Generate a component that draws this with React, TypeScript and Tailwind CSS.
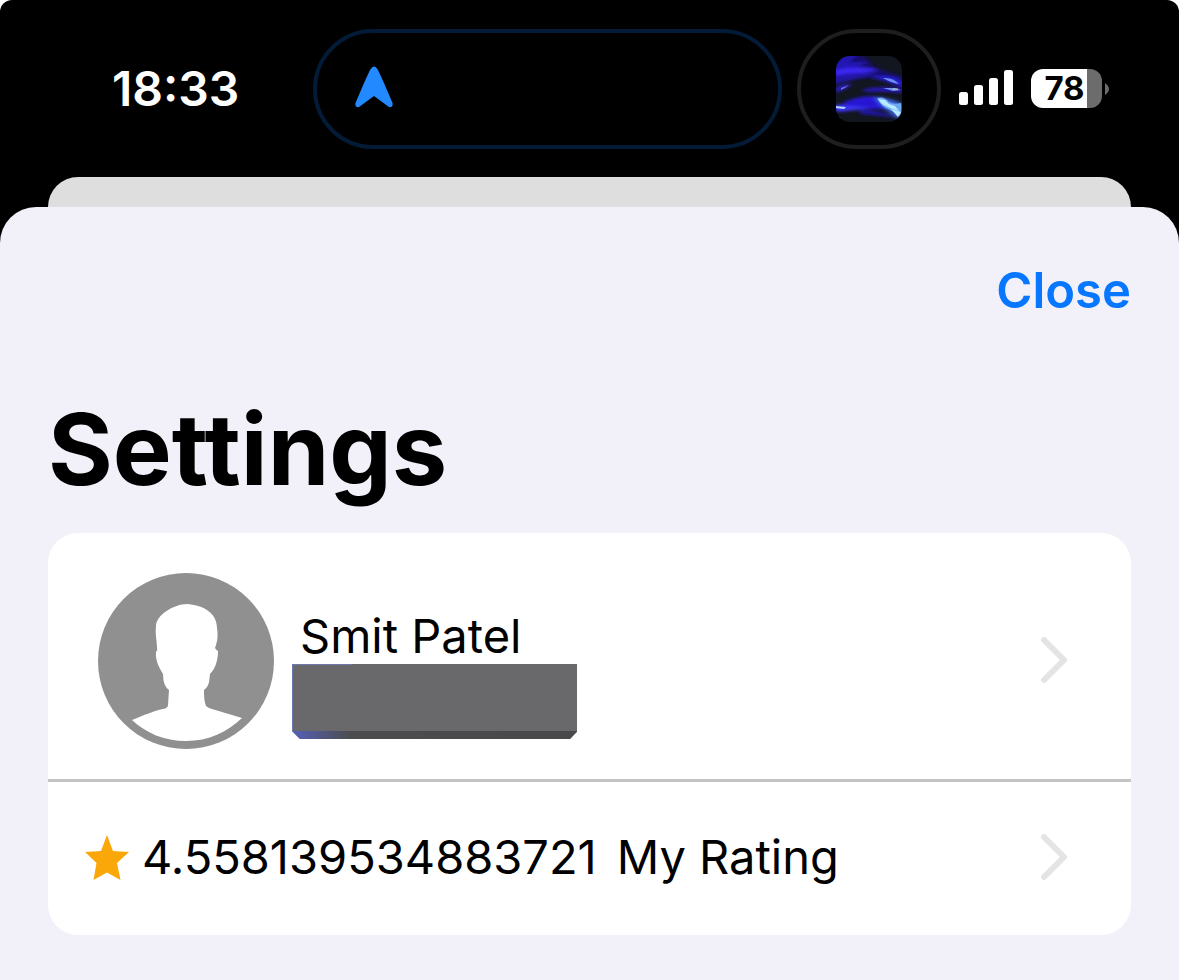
import React from "react";

const AlbumArt = () => (
    <svg className="size-[66px] shrink-0" viewBox="0 0 66 66" aria-hidden="true">
        <defs>
            <clipPath id="art"><rect width="66" height="66" rx="14" /></clipPath>
            <filter id="soft" x="-20%" y="-50%" width="140%" height="200%"><feGaussianBlur stdDeviation="2.4 1.4" /></filter>
            <filter id="fine" x="-20%" y="-50%" width="140%" height="200%"><feGaussianBlur stdDeviation="0.7" /></filter>
        </defs>
        <g clipPath="url(#art)">
            <rect width="66" height="66" fill="#12161f" />
            <g filter="url(#soft)">
                <path d="M-4 -2 H26 L40 12 L66 20 L66 26 L30 22 L-4 28Z" fill="#150e66" />
                <path d="M-4 0 L24 -2 L12 6 L34 6 L20 11 L-4 14Z" fill="#2217b4" />
                <path d="M-4 15 Q18 8 44 14 Q22 18 -4 22Z" fill="#3a28f0" />
                <path d="M-4 20 Q20 15 44 18 Q20 22 -4 29Z" fill="#2314a4" />
                <path d="M36 21 Q54 17 68 26 L68 32 Q52 26 36 21Z" fill="#281bd0" />
                <path d="M-2 33 Q7 27 16 28 Q9 34 -2 37Z" fill="#2b1cc4" />
                <path d="M28 33 Q48 29 68 33 L68 37 Q44 35 28 36Z" fill="#2517b4" />
                <path d="M8 46 Q28 38 44 41 L54 54 Q34 51 4 56Z" fill="#2818d4" />
                <path d="M-2 48 L16 50 L36 52 L12 55 L-2 56Z" fill="#3b35f0" />
                <path d="M24 54 Q42 53 62 62 Q42 59 24 58Z" fill="#2412a8" />
                <path d="M38 41 Q54 41 68 49 L68 66 Q50 56 38 41Z" fill="#3d63e0" />
            </g>
            <g filter="url(#fine)">
                <path d="M47 22 Q57 21 63 28 Q55 27 47 22Z" fill="#6b8cf4" />
                <path d="M5 32 L13 29 L9 32 L5 34Z" fill="#656dd6" />
                <path d="M47 32 L58 32 L65 34 L57 35Z" fill="#6f91ee" />
                <path d="M-1 50 L10 51 L8 53 L-1 52Z" fill="#b4d6ff" />
                <path d="M41 42 Q48 40 53 46 Q58 49 65 47 L65 61 L60 57 L54 54 Q45 51 41 42Z" fill="#6da9f2" />
                <path d="M42 43 L49 44 L53 48 L59 50 L63 55 L54 52 L46 48Z M55 53 L65 56 L62 61Z" fill="#b9eaff" />
                <path d="M1 60 L5 62 L1 63Z" fill="#4740dc" />
                <path d="M57 33 H62" stroke="#e0d29b" strokeWidth="1" />
            </g>
        </g>
    </svg>
)

const Avatar = () => (
    <svg className="size-[176px] shrink-0" viewBox="0 0 176 176" aria-hidden="true">
        <circle cx="88" cy="88" r="88" fill="#909090" />
        <path
            fill="#fff"
            d="M89 31 C104 32 119 39 119 55 C120 62 120 67 117 75 Q118 77 120 78 C120 88 117 96 112 101 C111 108 112 112 106 117 C106 123 106 128 108 133 Q110 135 114 136 L144 145 C129 159 111 168 88 168 C66 168 48 160 34 147 C46 142 56 138 65 136 Q70 135 70 132 L71 117 Q65 113 65 101 C62 96 57 88 58 79 Q60 77 59 75 C59 68 57 61 58 53 C58 42 76 31 89 31Z"
        />
    </svg>
)

const Chevron = () => (
    <svg className="h-12 w-7 shrink-0" viewBox="0 0 28 48" fill="none" aria-hidden="true">
        <path d="M4 3 L24 23 L4 43" stroke="#e4e4e4" strokeWidth="6" strokeLinecap="round" strokeLinejoin="round" />
    </svg>
)

const StatusBar = () => (
    <header className="flex h-[177px] items-center rounded-t-xl bg-black pr-[70px] pl-28 text-white">
        <time className="w-[201px] shrink-0 text-5xl font-semibold">18:33</time>
        <div className="flex h-[120px] flex-1 items-center rounded-[60px] border-4 border-[#031b36] pl-[37px]">
            <svg className="mb-1 h-11 w-10" viewBox="0 0 40 44" aria-hidden="true">
                <path d="M17 3.5 Q20 -0.5 23 3.5 Q25 6 38.5 38 Q39.5 43 35 42 L20 31 L5 42 Q0.5 43 1.5 38 Q15 6 17 3.5Z" fill="#2389ff" />
            </svg>
        </div>
        <div className="ml-[15px] flex h-[120px] w-36 shrink-0 items-center justify-center rounded-[60px] border-4 border-[#1e1e1e]">
            <AlbumArt />
        </div>
        <svg className="ml-[18px] h-[38px] w-[55px] shrink-0" viewBox="0 0 55 38" fill="#fff" aria-hidden="true">
            <rect x="0" y="22" width="9" height="13" rx="2.5" />
            <rect x="15" y="15" width="9" height="20" rx="2.5" />
            <rect x="30" y="8" width="9" height="27" rx="2.5" />
            <rect x="45" y="0" width="9" height="35" rx="2.5" />
        </svg>
        <div className="ml-[17px] flex h-[39px] w-[71px] shrink-0 items-center justify-center rounded-xl bg-linear-to-r from-white from-79% to-[#6c6c6c] to-79% pr-1 text-[33px] font-bold text-black">
            78
        </div>
        <svg className="ml-[3px] h-3 w-1 shrink-0" viewBox="0 0 4 12" aria-hidden="true">
            <path d="M0 0 Q4 3 4 6 Q4 9 0 12Z" fill="#6c6c6c" />
        </svg>
    </header>
)

export default () => {
    return <div className="min-h-screen bg-white font-['Inter','Liberation_Sans',sans-serif] text-black">
        <StatusBar />
        <div className="bg-black">
            <div className="mx-12 h-[30px] rounded-t-[30px] bg-[#dedede]"></div>
        </div>
        <div className="bg-black">
            <main className="min-h-[calc(100vh-207px)] rounded-t-[36px] bg-[#f2f1fa] px-12 pt-[52px] pb-11">
                <div className="flex justify-end">
                    <button type="button" className="text-[49px] leading-[64px] font-semibold text-[#0677fe]">Close</button>
                </div>
                <h1 className="mt-16 text-[99px] leading-[124px] font-bold">Settings</h1>
                <div className="mt-[22px] overflow-hidden rounded-[30px] bg-white">
                    <button type="button" className="flex w-full items-center border-b-[3px] border-[#c4c4c4] pt-10 pr-[63px] pb-[30px] pl-[50px] text-left">
                        <Avatar />
                        <span className="ml-[18px] flex flex-1 flex-col pt-6">
                            <span className="pl-2 text-[47px] leading-[56px]">Smit Patel</span>
                            <svg className="h-[75px] w-[285px]" viewBox="0 0 285 75" aria-hidden="true">
                                <defs>
                                    <linearGradient id="edge">
                                        <stop offset="0" stopColor="#5460b8" />
                                        <stop offset="0.2" stopColor="#4d4d50" />
                                        <stop offset="1" stopColor="#48484a" />
                                    </linearGradient>
                                </defs>
                                <path d="M0 0 H285 V68 L278 75 H8 L0 67Z" fill="#69696b" />
                                <path d="M0 67 H285 L278 75 H8Z" fill="url(#edge)" />
                                <path d="M60 0.5 H0.5 V67" fill="none" stroke="#7078b0" />
                            </svg>
                        </span>
                        <Chevron />
                    </button>
                    <button type="button" className="flex h-[153px] w-full items-center pr-[63px] pb-[2px] pl-9 text-left text-[47px]">
                        <svg className="h-[46px] w-[46px] shrink-0" viewBox="0 0 46 46" aria-hidden="true">
                            <path d="M23 0 L29 16 L45 17 L33 28 L36.5 45 L23 37.5 L9.5 45 L12.5 28 L1 17 L17 16Z" fill="#faa70a" />
                        </svg>
                        <span className="ml-3">4.558139534883721</span>
                        <span className="ml-5 flex-1">My Rating</span>
                        <Chevron />
                    </button>
                </div>
            </main>
        </div>
    </div>
}
